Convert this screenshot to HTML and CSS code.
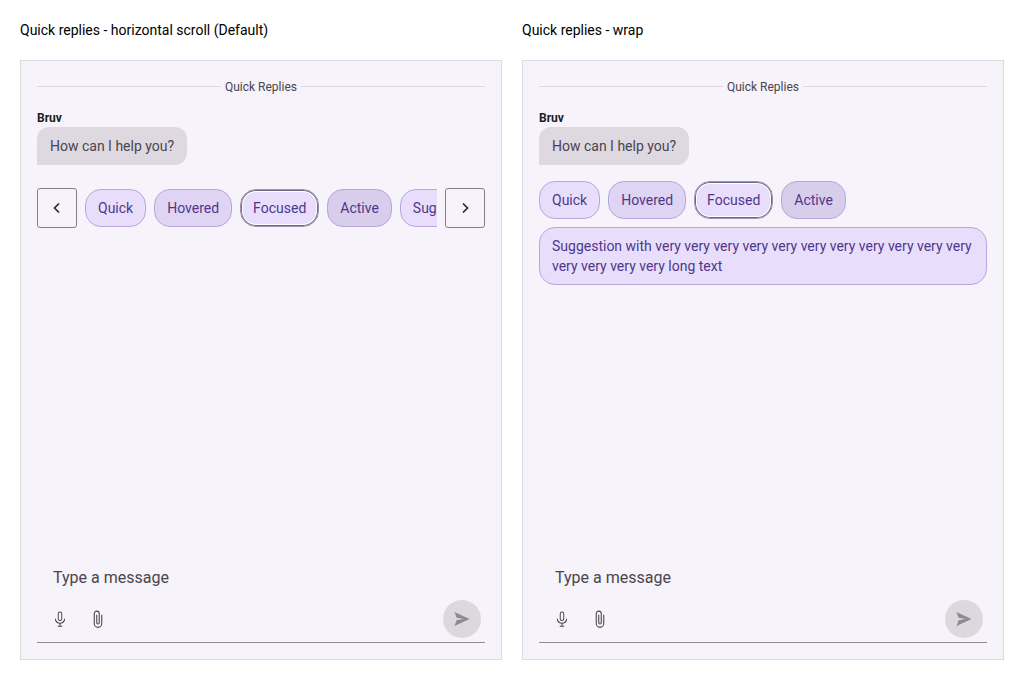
FILE: index.html
```html
<!DOCTYPE html>
<html lang="en">
<head>
    <meta charset="UTF-8">
    <title>Quick replies</title>
    <link rel="stylesheet" href="styles.css">
</head>
<body>
    <div class="page">
        <section class="demo">
            <h2 class="demo-title">Quick replies - horizontal scroll (Default)</h2>
            <div class="chat">
                <div class="divider"><span>Quick Replies</span></div>
                <div class="sender">Bruv</div>
                <div class="bubble">How can I help you?</div>
                <div class="scroller">
                    <button class="arrow" aria-label="Previous">
                        <svg width="12" height="12" viewBox="0 0 12 12"><path d="M8 1.500 3.500 6 8 10.500" /></svg>
                    </button>
                    <div class="scroll-track">
                        <button class="chip">Quick</button>
                        <button class="chip hovered">Hovered</button>
                        <button class="chip focused">Focused</button>
                        <button class="chip active">Active</button>
                        <button class="chip">Suggestion with very very very very long text</button>
                    </div>
                    <button class="arrow" aria-label="Next">
                        <svg width="12" height="12" viewBox="0 0 12 12"><path d="M4 1.500 8.500 6 4 10.500" /></svg>
                    </button>
                </div>
                <div class="composer">
                    <div class="placeholder">Type a message</div>
                    <div class="composer-actions">
                        <button class="tool" aria-label="Record">
                            <svg width="18" height="18" viewBox="0 0 24 24"><path d="M12 14.500a3 3 0 0 0 3-3V5a3 3 0 0 0-6 0v6.500a3 3 0 0 0 3 3Zm-1.700-9.500a1.700 1.700 0 0 1 3.400 0v6.500a1.700 1.700 0 0 1-3.400 0V5Zm7.200 6.500a5.500 5.500 0 0 1-11 0H5.200a6.800 6.800 0 0 0 6.100 6.700V21H9v1.300h6V21h-2.300v-2.800a6.800 6.800 0 0 0 6.100-6.700h-1.300Z" /></svg>
                        </button>
                        <button class="tool" aria-label="Attach">
                            <svg width="20" height="20" viewBox="0 0 24 24"><path class="clip" d="M16.500 7v10.500a4.500 4.500 0 0 1-9 0V5.500a3 3 0 0 1 6 0v11a1.500 1.500 0 0 1-3 0V7" /></svg>
                        </button>
                        <button class="send" aria-label="Send">
                            <svg width="20" height="20" viewBox="0 0 24 24"><path d="M3 20.500 21 12 3 3.500l2.500 7L14 12l-8.500 1.500-2.500 7Z" /></svg>
                        </button>
                    </div>
                </div>
            </div>
        </section>
        <section class="demo">
            <h2 class="demo-title">Quick replies - wrap</h2>
            <div class="chat">
                <div class="divider"><span>Quick Replies</span></div>
                <div class="sender">Bruv</div>
                <div class="bubble">How can I help you?</div>
                <div class="wrap-list">
                    <button class="chip">Quick</button>
                    <button class="chip hovered">Hovered</button>
                    <button class="chip focused">Focused</button>
                    <button class="chip active">Active</button>
                    <button class="chip">Suggestion with very very very very very very very very very very very very very very very long text</button>
                </div>
                <div class="composer">
                    <div class="placeholder">Type a message</div>
                    <div class="composer-actions">
                        <button class="tool" aria-label="Record">
                            <svg width="18" height="18" viewBox="0 0 24 24"><path d="M12 14.500a3 3 0 0 0 3-3V5a3 3 0 0 0-6 0v6.500a3 3 0 0 0 3 3Zm-1.700-9.500a1.700 1.700 0 0 1 3.400 0v6.500a1.700 1.700 0 0 1-3.400 0V5Zm7.200 6.500a5.500 5.500 0 0 1-11 0H5.200a6.800 6.800 0 0 0 6.100 6.700V21H9v1.300h6V21h-2.300v-2.800a6.800 6.800 0 0 0 6.100-6.700h-1.300Z" /></svg>
                        </button>
                        <button class="tool" aria-label="Attach">
                            <svg width="20" height="20" viewBox="0 0 24 24"><path class="clip" d="M16.500 7v10.500a4.500 4.500 0 0 1-9 0V5.500a3 3 0 0 1 6 0v11a1.500 1.500 0 0 1-3 0V7" /></svg>
                        </button>
                        <button class="send" aria-label="Send">
                            <svg width="20" height="20" viewBox="0 0 24 24"><path d="M3 20.500 21 12 3 3.500l2.500 7L14 12l-8.500 1.500-2.500 7Z" /></svg>
                        </button>
                    </div>
                </div>
            </div>
        </section>
    </div>
</body>
</html>
```

FILE: styles.css
```css
body {
    margin: 0;
    background: #fff;
    font-family: Roboto, "Liberation Sans", sans-serif;
    color: #1d1b20;
}
button {
    font-family: inherit;
    cursor: pointer;
}
.page {
    display: flex;
    gap: 20px;
    padding: 20px;
}
.demo {
    width: 482px;
}
.demo-title {
    margin: 0 0 20px;
    font-size: 14px;
    font-weight: 400;
    line-height: 20px;
    color: #000;
}
.chat {
    box-sizing: border-box;
    height: 600px;
    padding: 16px;
    display: flex;
    flex-direction: column;
    align-items: flex-start;
    background: #f6f3fa;
    border: 1px solid #dcd9e3;
}
.divider {
    width: 100%;
    display: flex;
    align-items: center;
    gap: 4px;
    font-size: 12px;
    line-height: 20px;
    color: #49454f;
}
.divider::before,
.divider::after {
    content: "";
    flex: 1;
    height: 1px;
    margin-top: -1px;
    background: #dcd8e2;
}
.sender {
    margin-top: 13px;
    font-size: 12px;
    font-weight: 700;
    line-height: 16px;
}
.bubble {
    margin-top: 1px;
    padding: 9px 13px;
    font-size: 14px;
    line-height: 20px;
    color: #49454f;
    background: #ded8e1;
    border-radius: 12px 12px 12px 0;
}
.scroller {
    width: 100%;
    margin-top: 23px;
    display: flex;
    align-items: center;
    gap: 8px;
}
.scroll-track {
    flex: 1;
    min-width: 0;
    display: flex;
    gap: 8px;
    overflow: hidden;
    padding: 1px 0;
}
.scroll-track .chip {
    flex: none;
    white-space: nowrap;
}
.arrow {
    flex: none;
    width: 40px;
    height: 40px;
    padding: 0;
    display: flex;
    align-items: center;
    justify-content: center;
    background: transparent;
    border: 1px solid #857f8d;
    border-radius: 3px;
}
.arrow path {
    fill: none;
    stroke: #2b2930;
    stroke-width: 1.7;
}
.wrap-list {
    margin-top: 16px;
    display: flex;
    flex-wrap: wrap;
    gap: 8px;
}
.chip {
    box-sizing: border-box;
    min-height: 38px;
    padding: 8px 12px;
    font-size: 14px;
    line-height: 20px;
    text-align: left;
    color: #4f378b;
    background: #e8defc;
    border: 1px solid #b9a6dc;
    border-radius: 16px;
}
.chip.hovered {
    background: #dfd4f3;
}
.chip.focused {
    border-color: #9c92b3;
    box-shadow: inset 0 0 0 1px #6f6880, inset 0 0 0 2px #fff;
}
.chip.active {
    background: #d8cdeb;
}
.composer {
    width: 100%;
    margin-top: auto;
    border-bottom: 1px solid #8f8b96;
}
.placeholder {
    padding: 0 16px;
    font-size: 16px;
    line-height: 24px;
    color: #49454f;
}
.composer-actions {
    margin-top: 10px;
    padding: 0 4px 4px 4px;
    display: flex;
    align-items: center;
}
.tool {
    width: 38px;
    height: 38px;
    padding: 0;
    display: flex;
    align-items: center;
    justify-content: center;
    background: transparent;
    border: none;
}
.tool path {
    fill: #49454f;
}
.tool path.clip {
    fill: none;
    stroke: #49454f;
    stroke-width: 1.3;
}
.send {
    width: 38px;
    height: 38px;
    margin-left: auto;
    padding: 0;
    display: flex;
    align-items: center;
    justify-content: center;
    background: #dcd8de;
    border: none;
    border-radius: 50%;
}
.send path {
    fill: #8e8a94;
}
```
